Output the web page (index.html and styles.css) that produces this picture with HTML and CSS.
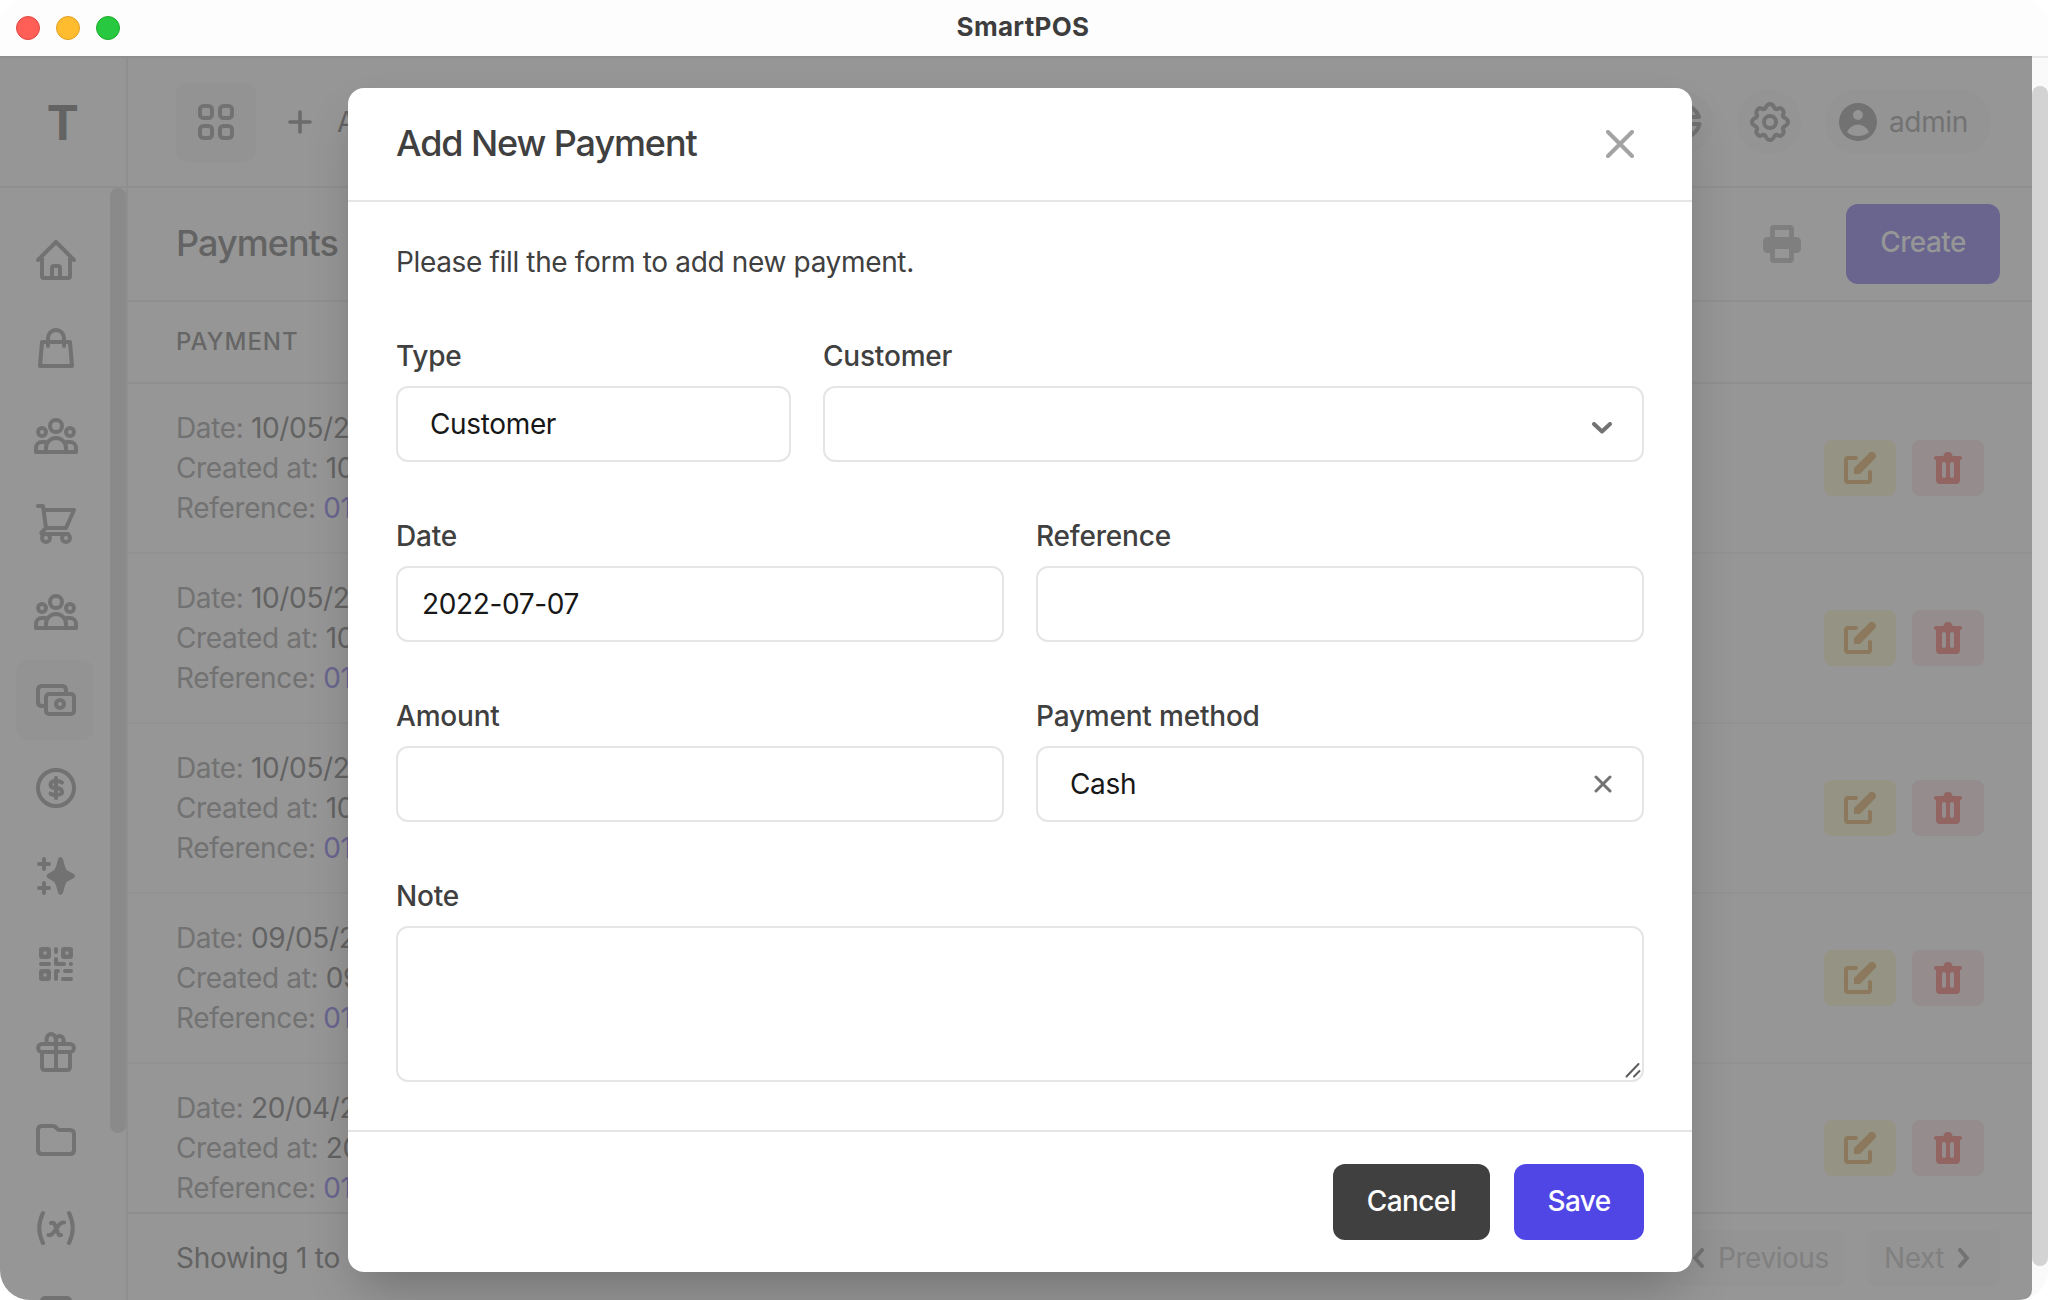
FILE: index.html
```html
<!DOCTYPE html>
<html lang="en">
<head>
<meta charset="utf-8">
<title>SmartPOS</title>
<link rel="stylesheet" href="styles.css">
</head>
<body>
<svg class="defs" width="0" height="0">
  <symbol id="users" viewBox="0 0 44 44"><circle cx="22" cy="12" r="6"/><circle cx="8" cy="18" r="4"/><circle cx="36" cy="18" r="4"/><path d="M12 37V34a10 10 0 0 1 20 0V37M11 28H8a6 6 0 0 0-6 6V38H42V34a6 6 0 0 0-6-6H33"/></symbol>
  <symbol id="edit" viewBox="0 0 32 32"><path d="M12 6H4Q2 6 2 8V28Q2 30 4 30H24Q26 30 26 28V20" fill="none" stroke="currentColor" stroke-width="4" stroke-linecap="round"/><path d="M10 22V16L25 1.2a4 4 0 0 1 5.8 5.6L16 22z" fill="currentColor"/></symbol>
  <symbol id="trash" viewBox="0 0 32 32"><path fill="currentColor" fill-rule="evenodd" d="M11.500 4Q12 0 16 0T20.500 4H28a2 2 0 0 1 0 4V28q0 4-4 4H8q-4 0-4-4V8a2 2 0 0 1 0-4zM10 12V24a2 2 0 0 0 4 0V12a2 2 0 0 0-4 0zM18 12V24a2 2 0 0 0 4 0V12a2 2 0 0 0-4 0z"/></symbol>
</svg>
<div class="window">
  <header class="titlebar">
    <div class="lights"><i class="red"></i><i class="yellow"></i><i class="green"></i></div>
    <span class="app-name">SmartPOS</span>
  </header>
  <div class="viewport">
    <div class="app">
      <aside class="sidebar">
        <div class="logo">T</div>
        <div class="nav-wrap">
          <nav class="nav">
            <a><svg class="ico" viewBox="0 0 40 40"><path d="M2 20L20 2L38 20M6 18V36Q6 38 8 38H32Q34 38 34 36V18M16 38V28Q16 26 18 26H22Q24 26 24 28V38"/></svg></a>
            <a><svg class="ico" viewBox="0 0 40 40"><path d="M6 14H34L36 38H4ZM12 18V10a8 8 0 0 1 16 0V18"/></svg></a>
            <a><svg class="ico wide"><use href="#users"/></svg></a>
            <a><svg class="ico" viewBox="0 0 40 40"><path d="M2 2H7L10 24H30L38 6H8M10 24L5.500 28.500Q5 30 7 30H32"/><circle cx="10" cy="34" r="4"/><circle cx="30" cy="34" r="4"/></svg></a>
            <a><svg class="ico wide"><use href="#users"/></svg></a>
            <a class="active"><svg class="ico" viewBox="0 0 40 40"><path d="M10 26H6Q2 26 2 22V10Q2 6 6 6H26Q30 6 30 10V14"/><rect x="10" y="14" width="28" height="20" rx="3"/><circle cx="24" cy="24" r="4"/></svg></a>
            <a><svg class="ico" viewBox="0 0 40 40"><circle cx="20" cy="20" r="18"/><path d="M20 10V30M26 14.500Q24 13 20 13Q14.500 13 14.500 16.500T20 20T26 23.500T20 27Q16 27 14.500 25.500"/></svg></a>
            <a><svg class="ico" viewBox="0 0 40 40"><path class="solid" d="M24.500 1Q26.500 1 27.200 4Q28.500 10.500 30.500 14L37 17.500Q39 18.500 39 20T37 22.500L30.500 26Q28.500 29.500 27.200 36Q26.500 39 24.500 39T21.800 36Q20.500 29.500 18.500 26L12.500 22.500Q10.500 21.500 10.500 20T12.500 17.500L18.500 14Q20.500 10.500 21.800 4Q22.500 1 24.500 1Z"/><path d="M8 3V13M3 8H13M8 27V37M3 32H13"/></svg></a>
            <a><svg class="ico" viewBox="0 0 40 40"><path class="solid" fill-rule="evenodd" d="M6 3H12Q15 3 15 6V12Q15 15 12 15H6Q3 15 3 12V6Q3 3 6 3ZM7.500 7.500V10.500H10.500V7.500ZM28 3H34Q37 3 37 6V12Q37 15 34 15H28Q25 15 25 12V6Q25 3 28 3ZM29.500 7.500V10.500H32.500V7.500ZM6 25H12Q15 25 15 28V34Q15 37 12 37H6Q3 37 3 34V28Q3 25 6 25ZM7.500 29.500V32.500H10.500V29.500Z"/><path d="M5 20H13M20 5V8M20 15V20H28M34.800 20H35M20 35V27H22M29 27H35M27 35H35"/></svg></a>
            <a><svg class="ico" viewBox="0 0 40 40"><path d="M6 22V35Q6 38 9 38H31Q34 38 34 35V22M20 12V38"/><rect x="2" y="12" width="36" height="8" rx="4"/><path d="M11 12Q9 3 15 2Q19 2 20 8V11Q19 4 24 4Q29 5 27 12"/></svg></a>
            <a><svg class="ico" viewBox="0 0 40 40"><path d="M6 6H17Q18.500 6 19.500 7L22 9.500Q22.500 10 24 10H34Q38 10 38 14V30Q38 34 34 34H6Q2 34 2 30V10Q2 6 6 6Z"/></svg></a>
            <a><svg class="ico" viewBox="0 0 40 40"><path d="M7 5Q-.5 20 7 35M33 5Q40.500 20 33 35M15 15Q18 14 19 17L22 25Q23 28 25 27M28 14.500Q25 14 22.500 17.500L18 24Q15 28 12.500 27"/></svg></a>
            <a><svg class="ico" viewBox="0 0 40 40"><rect x="6" y="2" width="28" height="36" rx="3"/></svg></a>
          </nav>
          <div class="nav-scroll"></div>
        </div>
      </aside>
      <main class="main">
        <div class="topbar">
          <div class="grid-btn"><svg class="ico" viewBox="0 0 40 40"><rect x="4" y="4" width="12" height="12" rx="3.500"/><rect x="24" y="4" width="12" height="12" rx="3.500"/><rect x="4" y="24" width="12" height="12" rx="3.500"/><rect x="24" y="24" width="12" height="12" rx="3.500"/></svg></div>
          <svg class="plus" viewBox="0 0 24 24"><path d="M12 2V22M2 12H22"/></svg>
          <span class="add">Add</span>
          <div class="tools">
            <div class="round"><svg class="ico globe" viewBox="0 0 40 40"><path d="M3 15A18 18 0 0 1 37 15ZM2.500 22H37.500A18 18 0 0 1 2.500 22Z"/></svg></div>
            <div class="round"><svg class="ico" viewBox="0 0 40 40"><path d="M20 2C23 2 23.500 4.500 24.500 6Q26 8 28.500 6.500C31 5 34.500 8.500 33.500 11.500Q32 14 34 15.500C35.500 16.500 38 17 38 20S35.500 23.500 34 24.500Q32 26 33.500 28.500C34.500 31.500 31 35 28.500 33.500Q26 32 24.500 34C23.500 35.500 23 38 20 38S16.500 35.500 15.500 34Q14 32 11.500 33.500C9 35 5.500 31.500 6.500 28.500Q8 26 6 24.500C4.500 23.500 2 23 2 20S4.500 16.500 6 15.500Q8 14 6.500 11.500C5.500 8.500 9 5 11.500 6.500Q14 8 15.500 6C16.500 4.500 17 2 20 2Z"/><circle cx="20" cy="20" r="6"/></svg></div>
            <div class="user"><svg class="avatar" viewBox="0 0 38 38"><path fill-rule="evenodd" d="M19 0a19 19 0 1 1 0 38a19 19 0 1 1 0-38ZM19 7a5 5 0 1 0 0 10a5 5 0 1 0 0-10ZM8 29Q12 33 19 33T30 29Q26 21.500 19 21.500T8 29Z"/></svg><span>admin</span></div>
          </div>
        </div>
        <div class="page-head">
          <h1>Payments</h1>
          <svg class="print" viewBox="0 0 38 38"><path fill-rule="evenodd" d="M11 0H27Q31 0 31 4V12H33Q38 12 38 17V23Q38 28 33 28H31V34Q31 38 27 38H11Q7 38 7 34V28H5Q0 28 0 23V17Q0 12 5 12H7V4Q7 0 11 0ZM12 5V12H26V5ZM12 24V33H26V24Z"/></svg>
          <button class="create">Create</button>
        </div>
        <div class="thead">PAYMENT</div>
        <div class="rows">
          <div class="row"><div>Date: <b>10/05/2022</b><br>Created at: <b>10/05/2022</b><br>Reference: <em>01G2</em></div><div class="acts"><span class="ed"><svg><use href="#edit"/></svg></span><span class="tr"><svg><use href="#trash"/></svg></span></div></div>
          <div class="row"><div>Date: <b>10/05/2022</b><br>Created at: <b>10/05/2022</b><br>Reference: <em>01G2</em></div><div class="acts"><span class="ed"><svg><use href="#edit"/></svg></span><span class="tr"><svg><use href="#trash"/></svg></span></div></div>
          <div class="row"><div>Date: <b>10/05/2022</b><br>Created at: <b>10/05/2022</b><br>Reference: <em>01G2</em></div><div class="acts"><span class="ed"><svg><use href="#edit"/></svg></span><span class="tr"><svg><use href="#trash"/></svg></span></div></div>
          <div class="row"><div>Date: <b>09/05/2022</b><br>Created at: <b>09/05/2022</b><br>Reference: <em>01G2</em></div><div class="acts"><span class="ed"><svg><use href="#edit"/></svg></span><span class="tr"><svg><use href="#trash"/></svg></span></div></div>
          <div class="row"><div>Date: <b>20/04/2022</b><br>Created at: <b>20/04/2022</b><br>Reference: <em>01G1</em></div><div class="acts"><span class="ed"><svg><use href="#edit"/></svg></span><span class="tr"><svg><use href="#trash"/></svg></span></div></div>
        </div>
        <div class="pager">
          <span class="count">Showing 1 to</span>
          <span class="pg prev"><svg viewBox="0 0 12 20"><path d="M10 2L3 10L10 18"/></svg>Previous</span>
          <span class="pg next">Next<svg viewBox="0 0 12 20"><path d="M2 2L9 10L2 18"/></svg></span>
        </div>
      </main>
    </div>
    <div class="page-scroll"><div class="thumb"></div></div>
  </div>
</div>
<section class="modal">
  <header class="m-head"><h2>Add New Payment</h2><svg class="close" viewBox="0 0 28 28"><path d="M2 2L26 26M26 2L2 26"/></svg></header>
  <div class="m-body">
    <p>Please fill the form to add new payment.</p>
    <div class="form">
      <div class="field type"><label>Type</label><div class="input select">Customer</div></div>
      <div class="field cust"><label>Customer</label><div class="input select"><svg class="chev" viewBox="0 0 20 12"><path d="M2 2L10 9.500L18 2"/></svg></div></div>
      <div class="field left"><label>Date</label><div class="input">2022-07-07</div></div>
      <div class="field right"><label>Reference</label><div class="input"></div></div>
      <div class="field left"><label>Amount</label><div class="input"></div></div>
      <div class="field right"><label>Payment method</label><div class="input select">Cash<svg class="clear" viewBox="0 0 18 18"><path d="M2 2L16 16M16 2L2 16"/></svg></div></div>
      <div class="field full"><label>Note</label><div class="input area"><svg class="grip" viewBox="0 0 16 16"><path d="M1.500 14.500L13.500 2M9 14.500L14.500 9"/></svg></div></div>
    </div>
  </div>
  <footer class="m-foot"><button class="cancel">Cancel</button><button class="save">Save</button></footer>
</section>
</body>
</html>
```
FILE: styles.css
```css
* { box-sizing: border-box; }
body { margin: 0; background: #fff; font-family: Inter, "Liberation Sans", sans-serif; font-size: 28px; line-height: 40px; letter-spacing: -0.35px; color: #404040; }
h1, h2, p { margin: 0; }
b { font-weight: 400; color: #636363; }
em { font-style: normal; color: #69658f; }
button { border: 0; font: inherit; letter-spacing: -.6px; font-weight: 500; padding: 0 0 2px; }
.defs { position: absolute; }
svg { display: block; flex: none; }
.window { width: 2048px; height: 1300px; border-radius: 24px 24px 30px 30px; overflow: hidden; display: flex; flex-direction: column; background: #fafafa; }
.titlebar { height: 56px; flex: none; background: #fdfdfd; display: grid; grid-template-columns: 1fr auto 1fr; align-items: center; padding: 0 16px; }
.lights { display: flex; gap: 16px; }
.lights i { width: 24px; height: 24px; border-radius: 50%; border: 1px solid; }
.red { background: #ff5f57; border-color: #e2463f !important; }
.yellow { background: #febc2e; border-color: #dfa023 !important; }
.green { background: #28c840; border-color: #1eab2c !important; }
.app-name { font-size: 26px; font-weight: 700; letter-spacing: .3px; color: #3d3d3d; margin-left: -2px; margin-top: -3px; }
.viewport { flex: 1; min-height: 0; display: flex; }
.app { width: 2032px; display: flex; background: #969696; border-top: 2px solid #8e8e8e; border-radius: 0 0 10px 0; overflow: hidden; color: #727272; }
.sidebar { width: 128px; border-right: 2px solid #8f8f8f; display: flex; flex-direction: column; }
.logo { height: 130px; flex: none; border-bottom: 2px solid #8f8f8f; display: flex; align-items: center; justify-content: center; padding: 2px 1px 0 0; font-size: 48px; font-weight: 700; color: #636363; }
.nav-wrap { display: flex; flex: 1; min-height: 0; overflow: hidden; }
.nav { width: 110px; padding: 32px 16px 0; display: flex; flex-direction: column; gap: 8px; }
.nav a { width: 78px; height: 80px; flex: none; border-radius: 12px; display: flex; align-items: center; justify-content: center; padding-left: 2px; }
.nav .active { background: #939393; }
.nav-scroll { width: 16px; height: 945px; border-radius: 8px; background: #8a8a8a; }
.ico { width: 40px; height: 40px; fill: none; stroke: #727272; stroke-width: 4; stroke-linecap: round; stroke-linejoin: round; }
.ico.wide { width: 44px; height: 44px; }
.ico .solid { fill: #727272; stroke: none; }
.main { flex: 1; display: flex; flex-direction: column; min-width: 0; }
.topbar { height: 130px; flex: none; border-bottom: 2px solid #8f8f8f; display: flex; align-items: center; padding: 0 41px 0 48px; }
.grid-btn { width: 80px; height: 80px; border-radius: 12px; background: #939393; display: flex; align-items: center; justify-content: center; }
.plus { width: 24px; height: 24px; margin: 0 25px 0 32px; fill: none; stroke: #6b6b6b; stroke-width: 3.6; stroke-linecap: round; }
.add { color: #636363; }
.tools { margin-left: auto; display: flex; gap: 24px; }
.round { width: 64px; height: 64px; border-radius: 32px; background: #949494; display: flex; align-items: center; justify-content: center; }
.round .ico { margin-left: 1px; }
.user { width: 166px; height: 64px; border-radius: 32px; background: #949494; display: flex; align-items: center; gap: 12px; padding-left: 14px; }
.avatar { width: 38px; height: 38px; fill: #727272; }
.page-head { height: 114px; flex: none; border-bottom: 2px solid #8f8f8f; display: flex; align-items: center; padding: 0 32px 0 48px; }
h1, h2 { font-size: 36px; font-weight: 550; line-height: 48px; letter-spacing: -1.1px; }
h1 { color: #636363; padding-bottom: 2px; letter-spacing: -.95px; }
.print { width: 38px; height: 38px; fill: #7f7f7f; margin: 0 45px 0 auto; }
.create { width: 154px; height: 80px; border-radius: 12px; background: #69658f; color: #969696; padding-bottom: 4px; }
.thead { height: 82px; flex: none; border-bottom: 2px solid #8f8f8f; padding: 0 48px; line-height: 80px; font-size: 24px; font-weight: 500; letter-spacing: 1px; color: #666; }
.rows { height: 828px; flex: none; overflow: hidden; }
.row { height: 170px; border-bottom: 2px solid #929292; display: flex; justify-content: space-between; align-items: center; padding: 0 48px; }
.acts { display: flex; gap: 16px; }
.acts span { width: 72px; height: 56px; border-radius: 8px; display: flex; align-items: center; justify-content: center; }
.acts svg { width: 32px; height: 32px; }
.ed { background: #959484; color: #8c795d; }
.tr { background: #958d8d; color: #926462; }
.pager { flex: 1; border-top: 2px solid #8d8d8d; display: flex; align-items: flex-start; padding: 16px 32px 0 48px; line-height: 56px; color: #808080; }
.count { color: #636363; margin-right: auto; letter-spacing: -.25px; }
.pg { height: 56px; display: flex; align-items: center; gap: 14px; border-radius: 8px; background: #949494; padding: 0 16px; letter-spacing: -.45px; }
.pg svg { width: 12px; height: 20px; fill: none; stroke: #737373; stroke-width: 4; stroke-linecap: round; stroke-linejoin: round; }
.prev { width: 168px; margin-right: 24px; }
.next { width: 132px; }
.page-scroll { width: 16px; border-top: 2px solid #e8e8e8; padding-top: 28px; background: #fafafa; }
.thumb { height: 1180px; border-radius: 8px; background: #d3d3d3; }

/* dialog lies over the page */
.modal { position: absolute; left: 348px; top: 88px; width: 1344px; height: 1184px; background: #fff; border-radius: 16px; box-shadow: 0 25px 50px -12px rgba(0,0,0,.25); display: flex; flex-direction: column; }
.m-head { height: 114px; border-bottom: 2px solid #e5e5e5; padding: 0 58px 2px 48px; display: flex; align-items: center; justify-content: space-between; }
.close { width: 28px; height: 28px; margin-top: 2px; fill: none; stroke: #a3a3a3; stroke-width: 4; stroke-linecap: round; }
.m-body { flex: 1; padding: 40px 48px 0; }
.form { margin-top: 59px; display: grid; grid-template-columns: 395px 32px 181px 32px 608px; row-gap: 59px; }
.field { display: flex; flex-direction: column; gap: 15px; }
.type { grid-column: 1; }
.cust { grid-column: 3 / 6; }
.left { grid-column: 1 / 4; }
.right { grid-column: 5; }
.full { grid-column: 1 / 6; }
label { font-weight: 500; line-height: 30px; letter-spacing: -.2px; }
.input { height: 76px; border: 2px solid #e5e5e5; border-radius: 12px; display: flex; align-items: center; justify-content: space-between; padding: 0 24px; color: #171717; }
.select { padding: 0 30px 0 32px; }
.chev { width: 20px; height: 12px; margin: 8px 0 0 auto; fill: none; stroke: #737373; stroke-width: 4; stroke-linecap: round; stroke-linejoin: round; }
.clear { width: 18px; height: 18px; fill: none; stroke: #737373; stroke-width: 3; stroke-linecap: round; }
.area { height: 156px; align-items: flex-end; justify-content: flex-end; padding: 0 1px 2px; }
.grip { width: 16px; height: 16px; fill: none; stroke: #5c5c5c; stroke-width: 2; stroke-linecap: round; }
.m-foot { height: 142px; border-top: 2px solid #e5e5e5; display: flex; justify-content: flex-end; gap: 24px; padding: 32px 48px; }
.m-foot button { height: 76px; border-radius: 12px; color: #fff; }
.cancel { width: 157px; background: #404040; }
.save { width: 130px; background: #4f46e5; }
```
